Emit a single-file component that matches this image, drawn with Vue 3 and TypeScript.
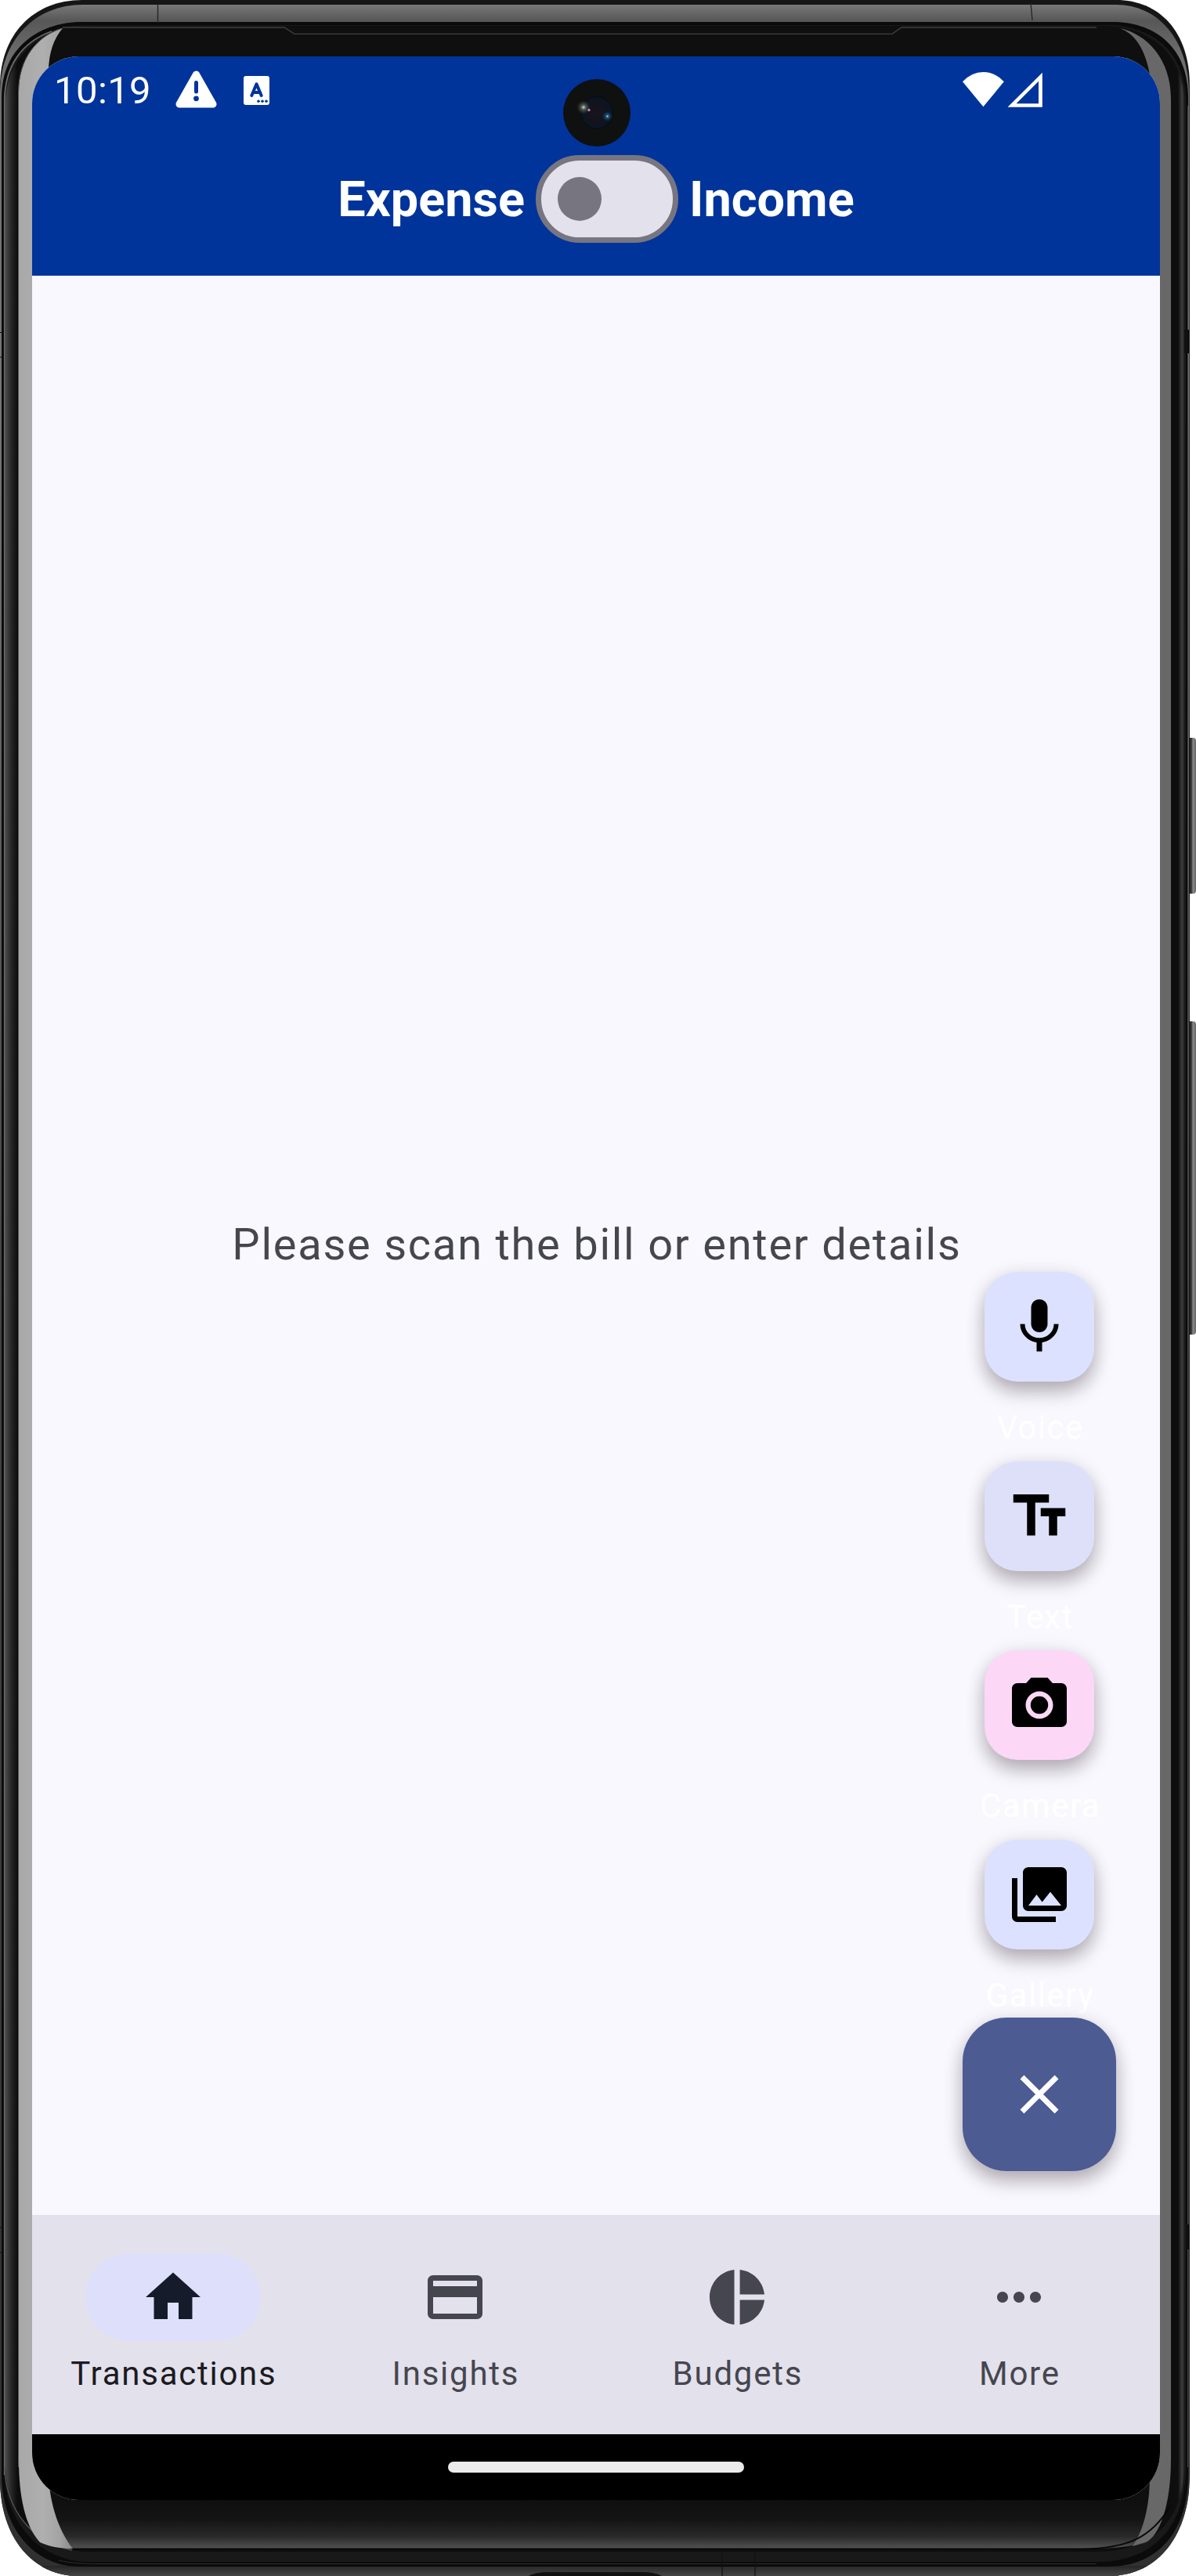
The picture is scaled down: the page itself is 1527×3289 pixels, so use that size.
<script setup lang="ts">
import { ref } from 'vue'

interface SpeedDialAction {
  label: string
  color: string
  paths: string[]
}

interface NavItem {
  label: string
  path: string
}

const income = ref(false)
const selected = ref(0)

const actions: SpeedDialAction[] = [
  {
    label: 'Voice',
    color: '#dce1ff',
    paths: [
      'M12 14c1.66 0 2.99-1.34 2.99-3L15 5c0-1.66-1.34-3-3-3S9 3.34 9 5v6c0 1.66 1.34 3 3 3zm5.3-3c0 3-2.54 5.1-5.3 5.1S6.7 14 6.7 11H5c0 3.41 2.72 6.23 6 6.72V21h2v-3.28c3.28-.48 6-3.3 6-6.72h-1.7z',
    ],
  },
  {
    label: 'Text',
    color: '#dee0f9',
    paths: ['M2.5 4v3h5v12h3V7h5V4h-13zm19 5h-9v3h3v7h3v-7h3V9z'],
  },
  {
    label: 'Camera',
    color: '#fdd7f6',
    paths: [
      'M12 8.8a3.2 3.2 0 1 0 0 6.4 3.2 3.2 0 1 0 0-6.4z',
      'M9 2L7.17 4H4c-1.1 0-2 .9-2 2v12c0 1.1.9 2 2 2h16c1.1 0 2-.9 2-2V6c0-1.1-.9-2-2-2h-3.17L15 2H9zm3 15c-2.76 0-5-2.24-5-5s2.24-5 5-5 5 2.24 5 5-2.24 5-5 5z',
    ],
  },
  {
    label: 'Gallery',
    color: '#dce1ff',
    paths: [
      'M22 16V4c0-1.1-.9-2-2-2H8c-1.1 0-2 .9-2 2v12c0 1.1.9 2 2 2h12c1.1 0 2-.9 2-2zm-11-4l2.03 2.71L16 11l4 5H8l3-4zM2 6v14c0 1.1.9 2 2 2h14v-2H4V6H2z',
    ],
  },
]

const navItems: NavItem[] = [
  { label: 'Transactions', path: 'M10 20v-6h4v6h5v-8h3L12 3 2 12h3v8z' },
  {
    label: 'Insights',
    path: 'M20 4H4c-1.11 0-1.99.89-1.99 2L2 18c0 1.11.89 2 2 2h16c1.11 0 2-.89 2-2V6c0-1.11-.89-2-2-2zm0 14H4v-6h16v6zm0-10H4V6h16v2z',
  },
  {
    label: 'Budgets',
    path: 'M11 2v20c-5.07-.5-9-4.79-9-10s3.93-9.5 9-10zm2.03 0v8.99H22c-.47-4.74-4.24-8.52-8.97-8.99zm0 11.01V22c4.74-.47 8.5-4.25 8.97-8.99h-8.97z',
  },
  {
    label: 'More',
    path: 'M6 10c-1.1 0-2 .9-2 2s.9 2 2 2 2-.9 2-2-.9-2-2-2zm12 0c-1.1 0-2 .9-2 2s.9 2 2 2 2-.9 2-2-.9-2-2-2zm-6 0c-1.1 0-2 .9-2 2s.9 2 2 2 2-.9 2-2-.9-2-2-2z',
  },
]
</script>

<template>
  <div class="device">
    <!-- Phone body -->
    <svg class="frame" viewBox="0 0 1527 3289" aria-hidden="true">
      <defs>
        <linearGradient id="metal" gradientUnits="userSpaceOnUse" x1="0" y1="5" x2="0" y2="3289">
          <stop offset="0" stop-color="#7a7a7a" />
          <stop offset="0.0065" stop-color="#575757" />
          <stop offset="0.02" stop-color="#6e6e6e" />
          <stop offset="0.15" stop-color="#777" />
          <stop offset="0.5" stop-color="#444" />
          <stop offset="1" stop-color="#303030" />
        </linearGradient>
        <linearGradient id="glassSide" gradientUnits="userSpaceOnUse" x1="7" y1="0" x2="1513" y2="0">
          <stop offset="0" stop-color="#4c4c4c" />
          <stop offset="0.004" stop-color="#2c2c2c" />
          <stop offset="0.01" stop-color="#0d0d0d" />
          <stop offset="0.994" stop-color="#0e0e0e" />
          <stop offset="0.9975" stop-color="#3d3d3d" />
          <stop offset="1" stop-color="#171717" />
        </linearGradient>
        <linearGradient id="chin" x1="0" y1="0" x2="0" y2="1">
          <stop offset="0" stop-color="#0f0f0f" />
          <stop offset="0.4" stop-color="#141414" />
          <stop offset="0.75" stop-color="#292929" />
          <stop offset="1" stop-color="#525252" />
        </linearGradient>
        <linearGradient id="base" x1="0" y1="0" x2="0" y2="1">
          <stop offset="0" stop-color="#262626" />
          <stop offset="1" stop-color="#464646" />
        </linearGradient>
        <linearGradient id="leftGlow" x1="0" y1="0" x2="1" y2="0">
          <stop offset="0" stop-color="#a8a8a8" />
          <stop offset="0.45" stop-color="#afafaf" />
          <stop offset="0.75" stop-color="#a4a4a4" />
          <stop offset="1" stop-color="#888" />
        </linearGradient>
        <linearGradient id="key" x1="0" y1="0" x2="1" y2="0">
          <stop offset="0" stop-color="#222" />
          <stop offset="0.45" stop-color="#303030" />
          <stop offset="0.65" stop-color="#8a8a8a" />
          <stop offset="1" stop-color="#666" />
        </linearGradient>
        <clipPath id="body">
          <path d="M105 0H1425C1480 0 1519 40 1519 110V3160C1519 3235 1480 3289 1415 3289H100C42 3289 0 3240 0 3165V110C0 45 42 0 105 0Z" />
        </clipPath>
      </defs>

      <rect x="1516" y="942" width="11" height="199" rx="4" fill="url(#key)" />
      <rect x="1516" y="1304" width="11" height="400" rx="4" fill="url(#key)" />

      <g clip-path="url(#body)">
        <rect width="1527" height="3289" fill="#161616" />
        <path d="M105 6H1425C1478 6 1518 50 1518 120V3289H0V120C0 50 46 6 105 6Z" fill="url(#metal)" />
        <rect y="3276" width="1527" height="13" fill="url(#base)" />
        <path d="M100 28H1425C1475 30 1517 60 1517 125V3160C1517 3230 1480 3277 1415 3277H100C48 3277 2 3232 2 3160V125C2 60 50 30 100 28Z" fill="#0b0b0b" />
        <path d="M110 32H1415C1470 33 1514 65 1514 130V3150C1514 3222 1476 3271 1400 3271H115C50 3271 5 3220 5 3150V130C5 66 50 33 110 32Z" fill="#191919" />
        <path d="M5.8 3160V130C5.8 85 27 54 66 40" fill="none" stroke="#6b6b6b" stroke-width="1.8" />
        <path d="M115 33H1410C1466 34 1512 66 1512 134V3145C1512 3216 1474 3258 1400 3258H105C45 3250 7 3212 7 3145V134C7 66 58 34 115 33Z" fill="url(#glassSide)" />
        <path d="M5.8 3150C8 3205 40 3245 92 3256" fill="none" stroke="#555" stroke-width="1.3" />
        <path d="M1516.5 135V3150" stroke="#444" stroke-width="1" />
        <path d="M80 35H1430C1454 40 1470 60 1472 100V3160C1472 3210 1462 3240 1448 3251C1425 3254 1400 3254 1370 3254H93C70 3225 62 3190 62 3160V100C62 68 70 45 80 35Z" fill="#0f0f0f" />
        <path d="M62 3192H1467C1464 3222 1458 3239 1447 3250C1425 3254 1400 3254 1370 3254H93C72 3230 64 3205 62 3192Z" fill="url(#chin)" />
        <path d="M80 36C48 46 24 74 24 118V3140C24 3187 32 3225 51 3246C64 3252 78 3254 93 3254C73 3229 62 3190 62 3155V92C62 67 69 49 80 36Z" fill="url(#leftGlow)" />
        <path d="M23.5 3150V118C23.5 74 48 45 80 36" fill="none" stroke="#565656" stroke-width="1" />
        <path d="M1430 36C1465 44 1495 76 1495 126V3140C1495 3200 1480 3238 1463 3246L1446 3251C1462 3228 1468 3195 1468 3160V95C1462 63 1450 44 1430 36Z" fill="#686868" />
        <path d="M80 35H363L376 43.3H1139L1151 35H1400" fill="none" stroke="#404040" stroke-width="1.3" />
        <path d="M93 3254.5H1380C1440 3254 1470 3240 1494 3200" fill="none" stroke="#080808" stroke-width="2" />
        <path d="M75 3269C92 3273 110 3273.5 130 3273.5H1400" fill="none" stroke="#2e2e2e" stroke-width="1" />
        <path d="M201.5 6V29M1316 4L1318 26" stroke="#272727" stroke-width="1.4" />
        <path d="M0 424.5H5M0 456H5M0 2844H5M0 2876H5M922 3256V3289M964 3256V3289" stroke="#111" stroke-width="1.2" />
        <path d="M1512 421H1519V451H1512ZM1514 2840H1519V2872H1514Z" fill="#101010" />
        <path d="M675 3289Q684 3284 700 3284H820Q836 3284 845 3289Z" fill="#111" />
      </g>
    </svg>

    <main class="screen">
      <header class="header">
        <div class="status">
          <span class="time">10:19</span>
          <svg class="warning" viewBox="0 0 53 48" aria-hidden="true">
            <path d="M26.5 5L48 43H5Z" fill="#fff" stroke="#fff" stroke-width="9" stroke-linejoin="round" />
            <path d="M26.5 15.5V27" stroke="#00349b" stroke-width="5" stroke-linecap="round" />
            <circle cx="26.5" cy="35.8" r="3.4" fill="#00349b" />
          </svg>
          <svg class="input-method" viewBox="0 0 33 37" aria-hidden="true">
            <rect width="33" height="37" rx="3" fill="#fff" />
            <path d="M10.3 25L16.5 10.3L22.7 25M12.5 21H20.5" fill="none" stroke="#00349b" stroke-width="4" stroke-linecap="round" stroke-linejoin="round" />
            <g fill="#00349b">
              <circle cx="19" cy="32.2" r="1.8" />
              <circle cx="24" cy="32.2" r="1.8" />
              <circle cx="29" cy="32.2" r="1.8" />
            </g>
          </svg>
          <svg class="signals" viewBox="0 0 102 45" aria-hidden="true">
            <path d="M0 12.3Q11.5 0 26.4 0T52.8 12.3L26.4 44.3Z" fill="#fff" />
            <path d="M57.5 44.8L101.8 .8V44.8ZM68.5 40.3H97V11.8Z" fill="#fff" fill-rule="evenodd" />
          </svg>
        </div>
        <div class="mode">
          <span>Expense</span>
          <button class="switch" :class="{ on: income }" aria-label="Income" @click="income = !income">
            <span class="thumb"></span>
          </button>
          <span>Income</span>
        </div>
      </header>

      <section class="content">
        <p class="hint">Please scan the bill or enter details</p>
        <div class="speed-dial">
          <div v-for="action in actions" :key="action.label" class="action">
            <button class="fab small" :style="{ backgroundColor: action.color }" :aria-label="action.label">
              <svg class="icon" viewBox="0 0 24 24"><path v-for="d in action.paths" :key="d" :d="d" /></svg>
            </button>
            <span class="action-label">{{ action.label }}</span>
          </div>
          <button class="fab main" aria-label="Close">
            <svg class="icon" viewBox="0 0 24 24">
              <path d="M19 6.41L17.59 5 12 10.59 6.41 5 5 6.41 10.59 12 5 17.59 6.41 19 12 13.41 17.59 19 19 17.59 13.41 12z" />
            </svg>
          </button>
        </div>
      </section>

      <nav class="nav">
        <button
          v-for="(item, i) in navItems"
          :key="item.label"
          class="nav-item"
          :class="{ active: selected === i }"
          @click="selected = i"
        >
          <span class="indicator">
            <svg class="icon" viewBox="0 0 24 24"><path :d="item.path" /></svg>
          </span>
          <span class="nav-label">{{ item.label }}</span>
        </button>
      </nav>

      <footer class="gesture"><span class="handle"></span></footer>
    </main>

    <!-- Punch-hole camera -->
    <svg class="lens" viewBox="0 0 86 86" aria-hidden="true">
      <defs>
        <radialGradient id="glass" cx="0.5" cy="0.5" r="0.5">
          <stop offset="0" stop-color="#19141f" />
          <stop offset="0.6" stop-color="#12131d" />
          <stop offset="0.88" stop-color="#0b1524" />
          <stop offset="1" stop-color="#0a0a0b" />
        </radialGradient>
        <radialGradient id="flare">
          <stop offset="0" stop-color="#e4e8df" />
          <stop offset="0.3" stop-color="#7a8277" stop-opacity="0.7" />
          <stop offset="1" stop-color="#304038" stop-opacity="0" />
        </radialGradient>
        <radialGradient id="blueFlare">
          <stop offset="0" stop-color="#b8e6ff" />
          <stop offset="0.25" stop-color="#236c99" stop-opacity="0.8" />
          <stop offset="1" stop-color="#0b2d50" stop-opacity="0" />
        </radialGradient>
      </defs>
      <circle cx="43" cy="43" r="43" fill="#0f1010" />
      <circle cx="43" cy="43" r="21" fill="url(#glass)" />
      <circle cx="26" cy="36" r="9" fill="url(#flare)" />
      <circle cx="33" cy="39.5" r="1.7" fill="#b68cad" />
      <circle cx="56.5" cy="47.5" r="7" fill="url(#blueFlare)" />
    </svg>
  </div>
</template>

<style>
body {
  margin: 0;
  background: #fff;
}
</style>

<style scoped>
.device {
  position: relative;
  box-sizing: border-box;
  width: 1527px;
  height: 3289px;
  padding: 72px 46px 97px 41px;
  overflow: hidden;
  font-family: Roboto, "Liberation Sans", sans-serif;
}

.frame {
  position: absolute;
  inset: 0;
  width: 1527px;
  height: 3289px;
}

.lens {
  position: absolute;
  left: 718.5px;
  top: 101px;
  width: 86px;
  height: 86px;
}

.screen {
  position: relative;
  display: flex;
  flex-direction: column;
  width: 1440px;
  height: 3120px;
  border-radius: 60px;
  overflow: hidden;
  background: #f9f8ff;
}

button {
  margin: 0;
  padding: 0;
  border: 0;
  background: none;
  font: inherit;
  color: inherit;
}

.icon {
  display: block;
  width: 84px;
  height: 84px;
  fill: currentColor;
}

.header {
  height: 280px;
  background: #00349b;
  color: #fff;
}

.status {
  display: flex;
  align-items: center;
  box-sizing: border-box;
  height: 84px;
  padding: 0 150px 0 28px;
}

.time {
  width: 124px;
  font-size: 49px;
  line-height: 58px;
  letter-spacing: 0.4px;
  white-space: nowrap;
  margin-top: 4px;
}

.warning {
  width: 53px;
  height: 48px;
  margin-left: 31px;
}

.input-method {
  width: 33px;
  height: 37px;
  margin: 2px 0 0 34px;
}

.signals {
  width: 102px;
  height: 45px;
  margin-left: auto;
}

.mode {
  display: flex;
  align-items: center;
  justify-content: center;
  gap: 14px;
  height: 196px;
  font-size: 63px;
  font-weight: 700;
}

.switch {
  display: flex;
  align-items: center;
  box-sizing: border-box;
  width: 182px;
  height: 112px;
  padding: 0 21px;
  border: 7px solid #777680;
  border-radius: 56px;
  background: #e3e1ec;
}

.switch.on {
  justify-content: flex-end;
}

.thumb {
  width: 56px;
  height: 56px;
  border-radius: 50%;
  background: #777680;
}

.content {
  position: relative;
  display: flex;
  flex: 1;
  align-items: center;
  justify-content: center;
}

.hint {
  margin: 0 -2px 2px 0;
  color: #46464f;
  font-size: 56px;
  line-height: 84px;
  letter-spacing: 1.75px;
}

/* Floating over the page content */
.speed-dial {
  position: absolute;
  right: 56px;
  bottom: 56px;
  display: flex;
  flex-direction: column;
  align-items: center;
}

.action {
  display: flex;
  flex-direction: column;
  align-items: center;
  height: 241.67px;
}

.action:nth-last-child(2) {
  height: 227px;
}

.fab {
  display: flex;
  align-items: center;
  justify-content: center;
  flex: none;
  box-shadow: 0 13px 23px rgba(20, 0, 10, 0.28), 0 2px 26px rgba(20, 0, 10, 0.08);
}

.fab.small {
  width: 140px;
  height: 140px;
  border-radius: 42px;
  color: #000;
}

.fab.main {
  position: relative;
  width: 196px;
  height: 196px;
  border-radius: 56px;
  background: #4c5b92;
  color: #fff;
}

.action-label {
  position: relative;
  margin: 31px -2px 0 0;
  color: #fff;
  font-size: 42px;
  line-height: 56px;
  letter-spacing: 1.4px;
}

.nav {
  display: flex;
  height: 280px;
  background: #e3e1ec;
  color: #46464f;
}

.nav-item {
  display: flex;
  flex: 1;
  flex-direction: column;
  align-items: center;
  padding-top: 49px;
}

.indicator {
  display: flex;
  align-items: center;
  justify-content: center;
  width: 224px;
  height: 112px;
  border-radius: 56px;
}

.active .indicator {
  background: #dee0fb;
  color: #161b2c;
}

.nav-label {
  margin: 14px -1.75px 0 0;
  font-size: 42px;
  line-height: 56px;
  letter-spacing: 1.75px;
}

.active .nav-label {
  color: #1b1b21;
}

.gesture {
  display: flex;
  align-items: center;
  justify-content: center;
  height: 84px;
  background: #000;
}

.handle {
  width: 378px;
  height: 14px;
  border-radius: 7px;
  background: #ebebeb;
}
</style>
